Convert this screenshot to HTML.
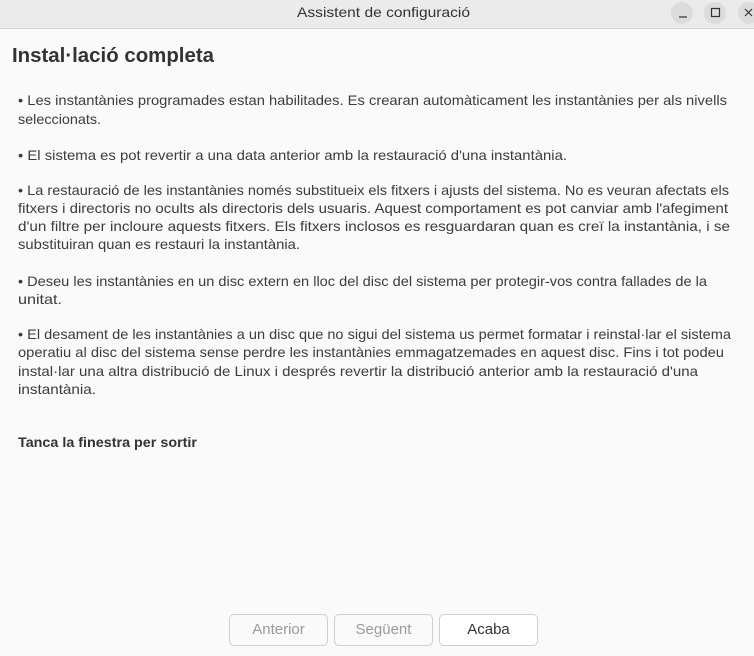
<!DOCTYPE html>
<html><head><meta charset="utf-8"><style>
html,body{margin:0;padding:0;width:754px;height:656px;overflow:hidden;background:#fafafa;font-family:"Liberation Sans",sans-serif}
.tb{position:absolute;left:0;top:0;width:754px;height:28px;background:#ebebeb;border-bottom:1px solid #d4d4d4}
.c{position:absolute;top:2px;width:22px;height:22px;border-radius:50%;background:#dcdcdc}
.btn{position:absolute;top:614px;height:32px;border:1px solid #cfcfcf;border-radius:5px;background:#fafafa;box-sizing:border-box;text-align:center;line-height:30px;font-size:15px}
svg{position:absolute;left:0;top:0}
</style></head><body>
<div class="tb"></div>
<div class="c" style="left:671px"></div>
<div class="c" style="left:704px"></div>
<div class="c" style="left:738px"></div>
<div class="btn" style="left:229px;width:99px;color:#9a9a9a">Anterior</div>
<div class="btn" style="left:334px;width:99px;color:#9a9a9a">Següent</div>
<div class="btn" style="left:439px;width:99px;color:#333;background:#fff">Acaba</div>
<svg width="754" height="656" font-family="Liberation Sans, sans-serif">
<text x="297" y="17" font-size="14" fill="#333" textLength="173" lengthAdjust="spacingAndGlyphs">Assistent de configuració</text>
<line x1="679" y1="17" x2="687" y2="17" stroke="#333" stroke-width="1.2"/>
<rect x="711.5" y="8.5" width="8" height="8" fill="none" stroke="#333" stroke-width="1.2"/>
<path d="M745 9l7 7M752 9l-7 7" stroke="#333" stroke-width="1.2"/>
<text x="12" y="62" font-size="20" font-weight="bold" fill="#333" textLength="202" lengthAdjust="spacingAndGlyphs">Instal·lació completa</text>
<g font-size="14" fill="#3c3c3c">
<text x="18" y="105" textLength="709" lengthAdjust="spacingAndGlyphs">• Les instantànies programades estan habilitades. Es crearan automàticament les instantànies per als nivells</text>
<text x="18" y="124" textLength="83" lengthAdjust="spacingAndGlyphs">seleccionats.</text>
<text x="18" y="160" textLength="549" lengthAdjust="spacingAndGlyphs">• El sistema es pot revertir a una data anterior amb la restauració d'una instantània.</text>
<text x="18" y="195" textLength="711" lengthAdjust="spacingAndGlyphs">• La restauració de les instantànies només substitueix els fitxers i ajusts del sistema. No es veuran afectats els</text>
<text x="18" y="213" textLength="710" lengthAdjust="spacingAndGlyphs">fitxers i directoris no ocults als directoris dels usuaris. Aquest comportament es pot canviar amb l'afegiment</text>
<text x="18" y="231" textLength="712" lengthAdjust="spacingAndGlyphs">d'un filtre per incloure aquests fitxers. Els fitxers inclosos es resguardaran quan es creï la instantània, i se</text>
<text x="18" y="249" textLength="282" lengthAdjust="spacingAndGlyphs">substituiran quan es restauri la instantània.</text>
<text x="18" y="286" textLength="689" lengthAdjust="spacingAndGlyphs">• Deseu les instantànies en un disc extern en lloc del disc del sistema per protegir-vos contra fallades de la</text>
<text x="18" y="304" textLength="44" lengthAdjust="spacingAndGlyphs">unitat.</text>
<text x="18" y="339" textLength="713" lengthAdjust="spacingAndGlyphs">• El desament de les instantànies a un disc que no sigui del sistema us permet formatar i reinstal·lar el sistema</text>
<text x="18" y="357" textLength="706" lengthAdjust="spacingAndGlyphs">operatiu al disc del sistema sense perdre les instantànies emmagatzemades en aquest disc. Fins i tot podeu</text>
<text x="18" y="376" textLength="680" lengthAdjust="spacingAndGlyphs">instal·lar una altra distribució de Linux i després revertir la distribució anterior amb la restauració d'una</text>
<text x="18" y="394" textLength="78" lengthAdjust="spacingAndGlyphs">instantània.</text>
<text x="18" y="447" font-weight="bold" fill="#333" textLength="179" lengthAdjust="spacingAndGlyphs">Tanca la finestra per sortir</text>
</g>
</svg>
</body></html>
